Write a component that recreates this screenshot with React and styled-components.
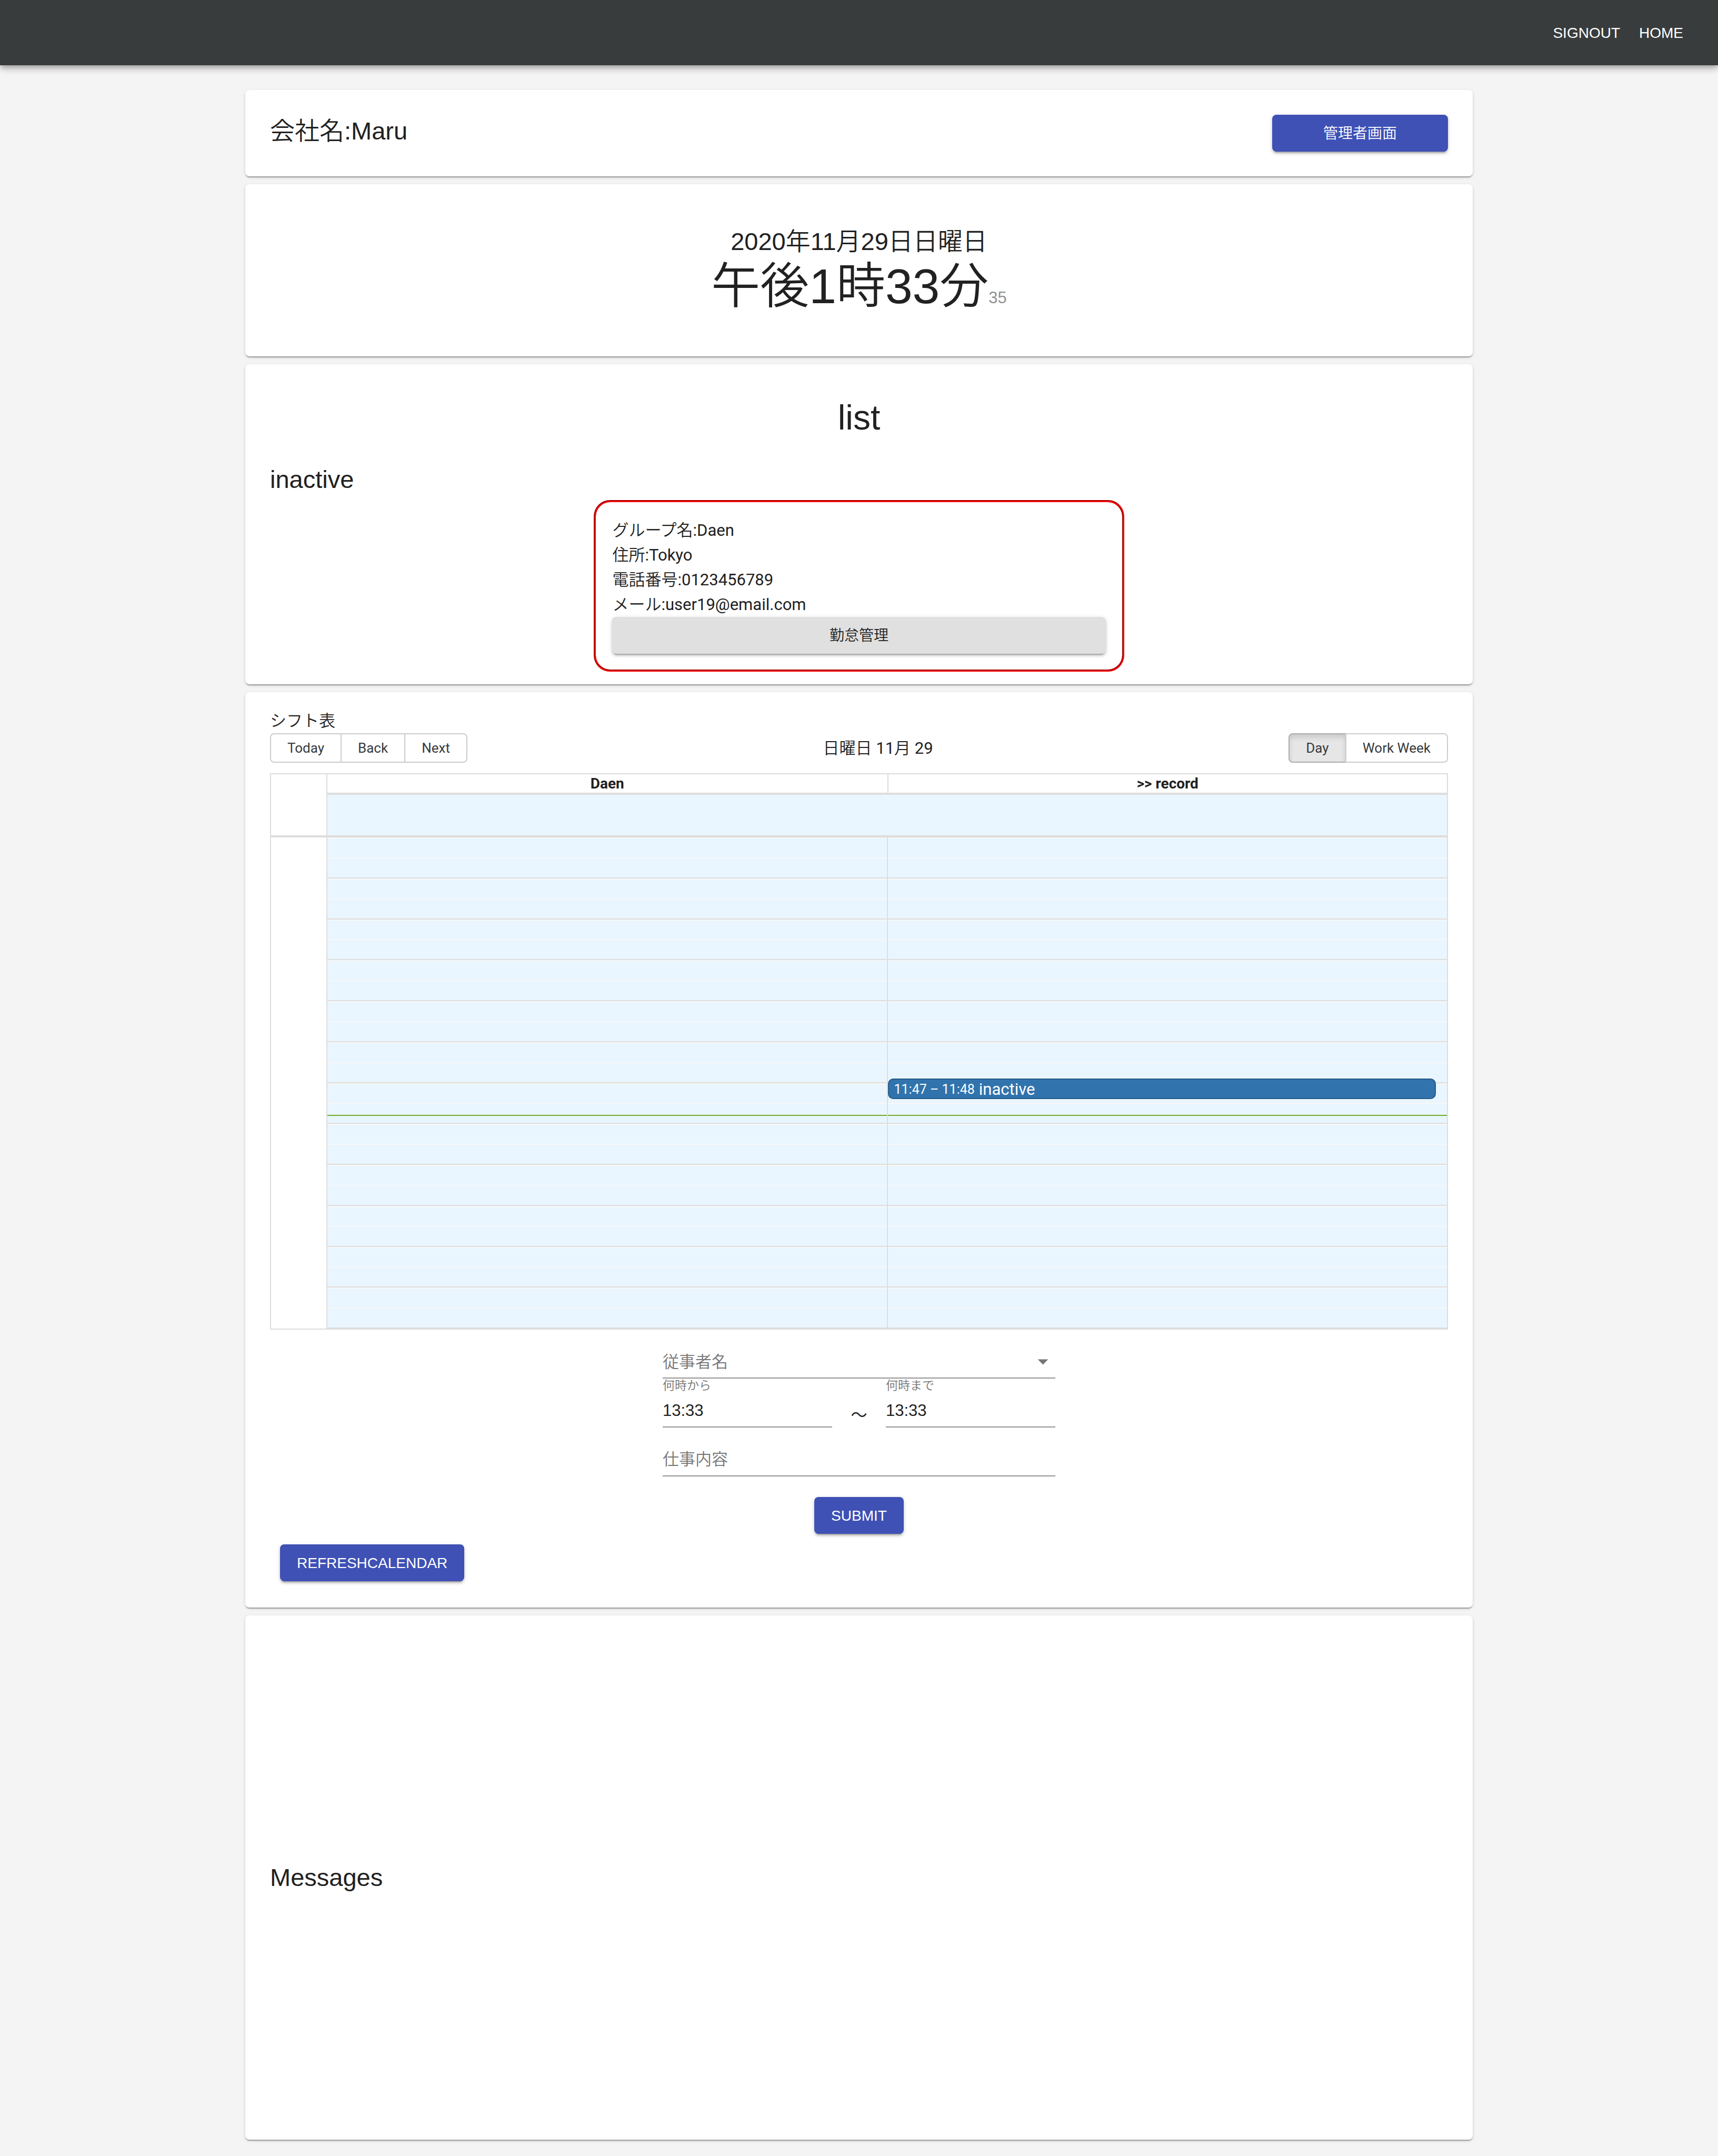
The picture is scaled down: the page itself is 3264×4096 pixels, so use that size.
import React from "react";
import styled, { createGlobalStyle, css } from "styled-components";

const sans = `"Liberation Sans", "Noto Sans CJK JP", sans-serif`;
const system = `Roboto, "Noto Sans CJK JP", sans-serif`;

const GlobalStyle = createGlobalStyle`
  *, *::before, *::after { box-sizing: border-box; }
  body {
    margin: 0;
    background: #f4f4f4;
    color: #212121;
    font-family: ${system};
    font-size: 31px;
    line-height: 47px;
  }
`;

const raised = css`
  box-shadow: 0 6px 2px -4px rgba(0, 0, 0, 0.2), 0 4px 4px rgba(0, 0, 0, 0.14),
    0 2px 10px rgba(0, 0, 0, 0.12);
`;

const AppBar = styled.header`
  position: relative;
  display: flex;
  align-items: center;
  justify-content: flex-end;
  height: 124px;
  padding: 0 66px;
  background: #393c3d;
  box-shadow: 0 4px 8px -2px rgba(0, 0, 0, 0.2), 0 8px 10px rgba(0, 0, 0, 0.14),
    0 2px 20px rgba(0, 0, 0, 0.12);
`;

const Nav = styled.nav`
  display: flex;
  gap: 36px;
`;

const NavLink = styled.a`
  color: #fff;
  font-family: ${sans};
  font-size: 28px;
  text-decoration: none;
  text-transform: uppercase;
`;

const Main = styled.main`
  display: flex;
  flex-direction: column;
  gap: 15px;
  max-width: 2332px;
  margin: 0 auto;
  padding: 47px 0 31px;
`;

const Card = styled.section`
  padding: ${(p) => p.$pad || "47px"};
  background: #fff;
  border-radius: 8px;
  box-shadow: 0 4px 2px -2px rgba(0, 0, 0, 0.2), 0 2px 2px rgba(0, 0, 0, 0.14),
    0 2px 6px rgba(0, 0, 0, 0.12);
`;

const CompanyRow = styled.div`
  display: flex;
  align-items: flex-start;
  justify-content: space-between;
`;

const Heading = styled.h2`
  margin: 0;
  font-family: ${sans};
  font-size: 47px;
  font-weight: 350;
  line-height: 62px;
`;

const ListTitle = styled.h1`
  margin: 0 0 46px;
  font-family: ${sans};
  font-size: 66px;
  font-weight: 400;
  line-height: 81px;
  text-align: center;
`;

const Japanese = styled.span`
  font-weight: 350;
`;

const tones = {
  primary: { bg: "#3f51b5", fg: "#fff" },
  plain: { bg: "#e0e0e0", fg: "#212121" },
};

const Button = styled.button`
  width: ${(p) => p.$width || "auto"};
  height: 70px;
  padding: 0 32px;
  border: 0;
  border-radius: 8px;
  background: ${(p) => tones[p.$tone || "primary"].bg};
  color: ${(p) => tones[p.$tone || "primary"].fg};
  font-family: ${sans};
  font-size: 28px;
  font-weight: 350;
  line-height: 47px;
  text-transform: uppercase;
  ${raised}
`;

const Clock = styled.div`
  text-align: center;
`;

const Time = styled.div`
  font-family: ${sans};
  font-size: 93px;
  font-weight: 350;
  line-height: 109px;
`;

const Seconds = styled.span`
  color: #8f8f8f;
  font-size: 31px;
  line-height: 31px;
`;

const MemberBox = styled.article`
  width: 45%;
  margin: 8px auto 0;
  padding: 30px 31px;
  border: 4px groove red;
  border-radius: 31px;
`;

const MemberLine = styled.p`
  margin: 0;
`;

const Toolbar = styled.div`
  display: flex;
  align-items: center;
  margin-bottom: 20px;
`;

const ToolbarLabel = styled.div`
  flex: 1;
  text-align: center;
`;

const ButtonGroup = styled.div`
  display: flex;
`;

const GroupButton = styled.button`
  height: 56px;
  padding: 0 31px;
  border: 2px solid #ccc;
  background: #fff;
  color: #373a3c;
  font-family: ${system};
  font-size: 26px;
  line-height: 47px;

  & + & {
    margin-left: -2px;
  }
  &:first-child {
    border-radius: 8px 0 0 8px;
  }
  &:last-child {
    border-radius: 0 8px 8px 0;
  }
  ${(p) =>
    p.$active &&
    css`
      border-color: #adadad;
      background: #e6e6e6;
      box-shadow: inset 0 6px 10px rgba(0, 0, 0, 0.125);
    `}
`;

const Calendar = styled.div`
  border: 2px solid #ddd;
`;

const CalendarHead = styled.div`
  display: flex;
  border-bottom: 4px solid #ddd;
`;

const Gutter = styled.div`
  flex: none;
  width: 107px;
  border-right: 2px solid #ddd;
`;

const HeadContent = styled.div`
  flex: 1;
`;

const HeadRow = styled.div`
  display: grid;
  grid-template-columns: 1fr 1fr;
  border-bottom: 4px solid #ddd;
`;

const HeadCell = styled.div`
  font-size: 28px;
  font-weight: 700;
  line-height: 35px;
  text-align: center;

  & + & {
    border-left: 2px solid #ddd;
  }
`;

const AllDay = styled.div`
  height: 77px;
  background: #eaf6ff;
`;

const CalendarBody = styled.div`
  display: flex;
  height: 933px;
`;

const Day = styled.div`
  position: relative;
  flex: 1;
  display: grid;
  grid-auto-rows: 1fr;
  background: #eaf6ff;

  & + & {
    border-left: 2px solid #ddd;
  }
`;

const SlotGroup = styled.div`
  display: grid;
  grid-auto-rows: 1fr;
  border-bottom: 2px solid #ddd;
`;

const Slot = styled.div`
  border-top: 2px solid #f7f7f7;
`;

const NowLine = styled.div`
  position: absolute;
  left: 0;
  right: 0;
  height: 2px;
  background: #74ad31;
`;

const Event = styled.div`
  position: absolute;
  left: 0;
  right: 2%;
  display: flex;
  gap: 8px;
  height: 39px;
  padding: 0 10px;
  border: 2px solid #265985;
  border-radius: 10px;
  background: #3174ad;
  color: #fff;
  line-height: 38px;
`;

const EventTime = styled.span`
  font-size: 25px;
`;

const Form = styled.form`
  display: flex;
  flex-direction: column;
  width: calc(100% / 3);
  margin: 31px auto 20px;
`;

const fieldStyle = css`
  display: block;
  width: 100%;
  height: 62px;
  margin: 0;
  padding: 0;
  border: 0;
  border-bottom: 2px solid #949494;
  border-radius: 0;
  outline: 0;
  background: transparent;
  font-family: ${sans};
  font-size: 31px;
  font-weight: 350;
`;

const TextInput = styled.input`
  ${fieldStyle}
  color: #212121;

  &::placeholder {
    color: #757575;
    opacity: 1;
  }
`;

const SelectWrap = styled.div`
  position: relative;
`;

const Select = styled.select`
  ${fieldStyle}
  appearance: none;
  color: #757575;
`;

const SelectArrow = styled.svg`
  position: absolute;
  top: 6px;
  right: 0;
  width: 47px;
  height: 47px;
  fill: #757575;
  pointer-events: none;
`;

const TimeRow = styled.div`
  display: grid;
  grid-template-columns: 1fr 102px 1fr;
  align-items: end;
  margin-bottom: 31px;
`;

const TimeLabel = styled.label`
  display: block;
  margin-bottom: 4px;
  color: #757575;
  font-size: 23px;
  font-weight: 350;
  line-height: 27px;
`;

const Tilde = styled.span`
  text-align: center;
`;

const SubmitRow = styled.div`
  display: flex;
  justify-content: center;
  margin-top: 39px;
`;

const RefreshRow = styled.div`
  padding-left: 19px;
  display: flex;
`;

const MessagesCard = styled(Card)`
  display: flex;
  align-items: center;
  min-height: 996px;
`;

const member = [
  ["グループ名", "Daen"],
  ["住所", "Tokyo"],
  ["電話番号", "0123456789"],
  ["メール", "user19@email.com"],
];

const hours = Array.from({ length: 12 }, (_, i) => i);

const percentOfDay = (h, m) => `${((h * 60 + m) / 1440) * 100}%`;

function DayColumn({ children }) {
  return (
    <Day>
      {hours.map((h) => (
        <SlotGroup key={h}>
          <Slot />
          <Slot />
        </SlotGroup>
      ))}
      <NowLine style={{ top: percentOfDay(13, 33) }} />
      {children}
    </Day>
  );
}

function TimeField({ id, label }) {
  return (
    <div>
      <TimeLabel htmlFor={id}>{label}</TimeLabel>
      <TextInput id={id} defaultValue="13:33" />
    </div>
  );
}

export default function App() {
  return (
    <>
      <GlobalStyle />
      <AppBar>
        <Nav>
          <NavLink href="#signout">Signout</NavLink>
          <NavLink href="#home">Home</NavLink>
        </Nav>
      </AppBar>
      <Main>
        <Card>
          <CompanyRow>
            <Heading>会社名:Maru</Heading>
            <Button type="button" $width="334px">管理者画面</Button>
          </CompanyRow>
        </Card>

        <Card $pad="78px 47px">
          <Clock>
            <Heading as="div">2020年11月29日日曜日</Heading>
            <Time>
              午後1時33分<Seconds>35</Seconds>
            </Time>
          </Clock>
        </Card>

        <Card $pad="61px 47px 24px">
          <ListTitle>list</ListTitle>
          <Heading>inactive</Heading>
          <MemberBox>
            {member.map(([name, value]) => (
              <MemberLine key={name}>
                <Japanese>{name}</Japanese>:{value}
              </MemberLine>
            ))}
            <Button type="button" $tone="plain" $width="100%">勤怠管理</Button>
          </MemberBox>
        </Card>

        <Card $pad="31px 47px 50px">
          <div>
            <Japanese>シフト表</Japanese>
          </div>
          <Toolbar>
            <ButtonGroup>
              <GroupButton type="button">Today</GroupButton>
              <GroupButton type="button">Back</GroupButton>
              <GroupButton type="button">Next</GroupButton>
            </ButtonGroup>
            <ToolbarLabel>
              <Japanese>日曜日</Japanese> 11<Japanese>月</Japanese> 29
            </ToolbarLabel>
            <ButtonGroup>
              <GroupButton type="button" $active>Day</GroupButton>
              <GroupButton type="button">Work Week</GroupButton>
            </ButtonGroup>
          </Toolbar>

          <Calendar>
            <CalendarHead>
              <Gutter />
              <HeadContent>
                <HeadRow>
                  <HeadCell>Daen</HeadCell>
                  <HeadCell>&gt;&gt; record</HeadCell>
                </HeadRow>
                <AllDay />
              </HeadContent>
            </CalendarHead>
            <CalendarBody>
              <Gutter />
              <DayColumn />
              <DayColumn>
                <Event style={{ top: percentOfDay(11, 47) }}>
                  <EventTime>11:47 – 11:48</EventTime>
                  <span>inactive</span>
                </Event>
              </DayColumn>
            </CalendarBody>
          </Calendar>

          <Form onSubmit={(e) => e.preventDefault()}>
            <SelectWrap>
              <Select aria-label="従事者名" defaultValue="">
                <option value="">従事者名</option>
                <option value="daen">Daen</option>
              </Select>
              <SelectArrow viewBox="0 0 24 24" aria-hidden="true">
                <path d="M7 10l5 5 5-5z" />
              </SelectArrow>
            </SelectWrap>
            <TimeRow>
              <TimeField id="time-from" label="何時から" />
              <Tilde>〜</Tilde>
              <TimeField id="time-to" label="何時まで" />
            </TimeRow>
            <TextInput aria-label="仕事内容" placeholder="仕事内容" />
            <SubmitRow>
              <Button type="submit">Submit</Button>
            </SubmitRow>
          </Form>
          <RefreshRow>
            <Button type="button">RefreshCalendar</Button>
          </RefreshRow>
        </Card>

        <MessagesCard>
          <Heading>Messages</Heading>
        </MessagesCard>
      </Main>
    </>
  );
}
